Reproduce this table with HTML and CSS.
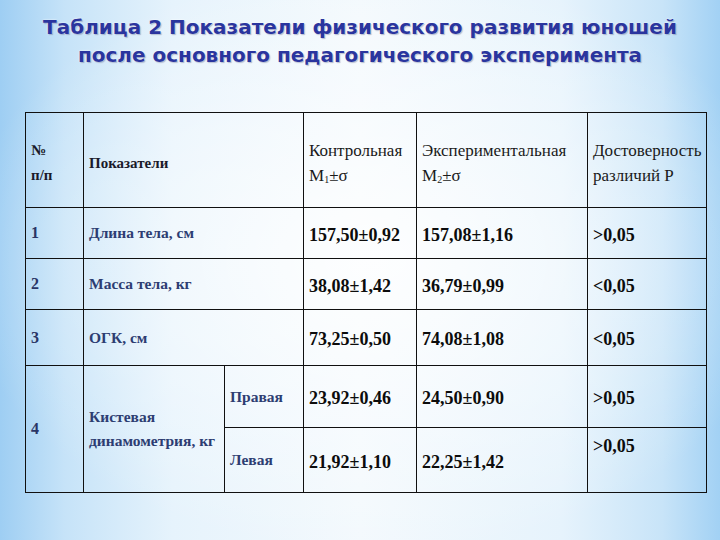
FILE: index.html
```html
<!DOCTYPE html>
<html lang="ru">
<head>
<meta charset="utf-8">
<link rel="stylesheet" href="styles.css">
</head>
<body>
<div class="slide">
  <h1 class="title">Таблица 2 Показатели физического развития юношей<br>после основного педагогического эксперимента</h1>
  <table class="data">
    <colgroup>
      <col class="c1"><col class="c2"><col class="c3"><col class="c4"><col class="c5"><col class="c6">
    </colgroup>
    <tr class="r-head">
      <td class="head bold">№<br>п/п</td>
      <td class="head bold" colspan="2">Показатели</td>
      <td class="head">Контрольная<br>М<sub>1</sub>±σ</td>
      <td class="head">Экспериментальная<br>М<sub>2</sub>±σ</td>
      <td class="head">Достоверность<br>различий Р</td>
    </tr>
    <tr class="r1">
      <td class="num">1</td>
      <td class="lbl" colspan="2">Длина тела, см</td>
      <td class="val">157,50±0,92</td>
      <td class="val">157,08±1,16</td>
      <td class="val">&gt;0,05</td>
    </tr>
    <tr class="r2">
      <td class="num">2</td>
      <td class="lbl" colspan="2">Масса тела, кг</td>
      <td class="val">38,08±1,42</td>
      <td class="val">36,79±0,99</td>
      <td class="val">&lt;0,05</td>
    </tr>
    <tr class="r3">
      <td class="num">3</td>
      <td class="lbl" colspan="2">ОГК, см</td>
      <td class="val">73,25±0,50</td>
      <td class="val">74,08±1,08</td>
      <td class="val">&lt;0,05</td>
    </tr>
    <tr class="r4">
      <td class="num" rowspan="2">4</td>
      <td class="lbl" rowspan="2">Кистевая<br>динамометрия, кг</td>
      <td class="lbl">Правая</td>
      <td class="val">23,92±0,46</td>
      <td class="val">24,50±0,90</td>
      <td class="val">&gt;0,05</td>
    </tr>
    <tr class="r5">
      <td class="lbl">Левая</td>
      <td class="val">21,92±1,10</td>
      <td class="val">22,25±1,42</td>
      <td class="val top">&gt;0,05</td>
    </tr>
  </table>
</div>
</body>
</html>
```
FILE: styles.css
```css
html, body {
  margin: 0;
  padding: 0;
}
body {
  width: 720px;
  height: 540px;
  overflow: hidden;
}
.slide {
  width: 720px;
  height: 540px;
  box-sizing: border-box;
  padding-top: 13px;
  background:
    radial-gradient(ellipse 58% 55% at 52% 48%, rgba(255,255,255,0.85) 0%, rgba(255,255,255,0) 100%),
    linear-gradient(90deg, #9ecef3 0%, #c6e3f8 9%, #e6f3fc 24%, #f3f9fd 50%, #e6f3fc 78%, #c8e4f8 92%, #a2d1f4 100%);
}
.title {
  margin: 0;
  text-align: center;
  font-family: "DejaVu Sans", Verdana, sans-serif;
  font-weight: bold;
  font-size: 20px;
  line-height: 28px;
  letter-spacing: 0;
  color: #2a359e;
  text-shadow: 0 0 2px #ffffff, 1px 1px 1px rgba(20,30,90,0.35);
}
.data {
  margin: 43px 0 0 25px;
  border-collapse: collapse;
  table-layout: fixed;
  width: 681px;
  font-family: "Liberation Serif", "Times New Roman", serif;
  color: #111;
}
.c1 { width: 58px; }
.c2 { width: 141px; }
.c3 { width: 79px; }
.c4 { width: 113px; }
.c5 { width: 171px; }
.c6 { width: 119px; }
.data td {
  border: 1.5px solid #101010;
  padding: 0 5px;
  vertical-align: middle;
}
.r-head { height: 95px; }
.r1 { height: 51px; }
.r2 { height: 51px; }
.r3 { height: 56px; }
.r4 { height: 62px; }
.r5 { height: 65px; }
.head {
  font-size: 17px;
  line-height: 25px;
  color: #1a1a1a;
  padding-top: 6px !important;
}
.head.bold {
  font-weight: bold;
  font-size: 15px;
  color: #1a1a2a;
}
.head sub {
  font-size: 10px;
  vertical-align: -2px;
  line-height: 0;
}
.num {
  font-weight: bold;
  font-size: 16px;
  color: #2a3566;
}
.lbl {
  font-weight: bold;
  font-size: 15.5px;
  line-height: 24px;
  color: #2d3d72;
}
.val {
  font-weight: bold;
  font-size: 18px;
  color: #0c0c0c;
  padding-top: 4px !important;
}
.val.top {
  vertical-align: top;
  padding-top: 8px !important;
}
```
